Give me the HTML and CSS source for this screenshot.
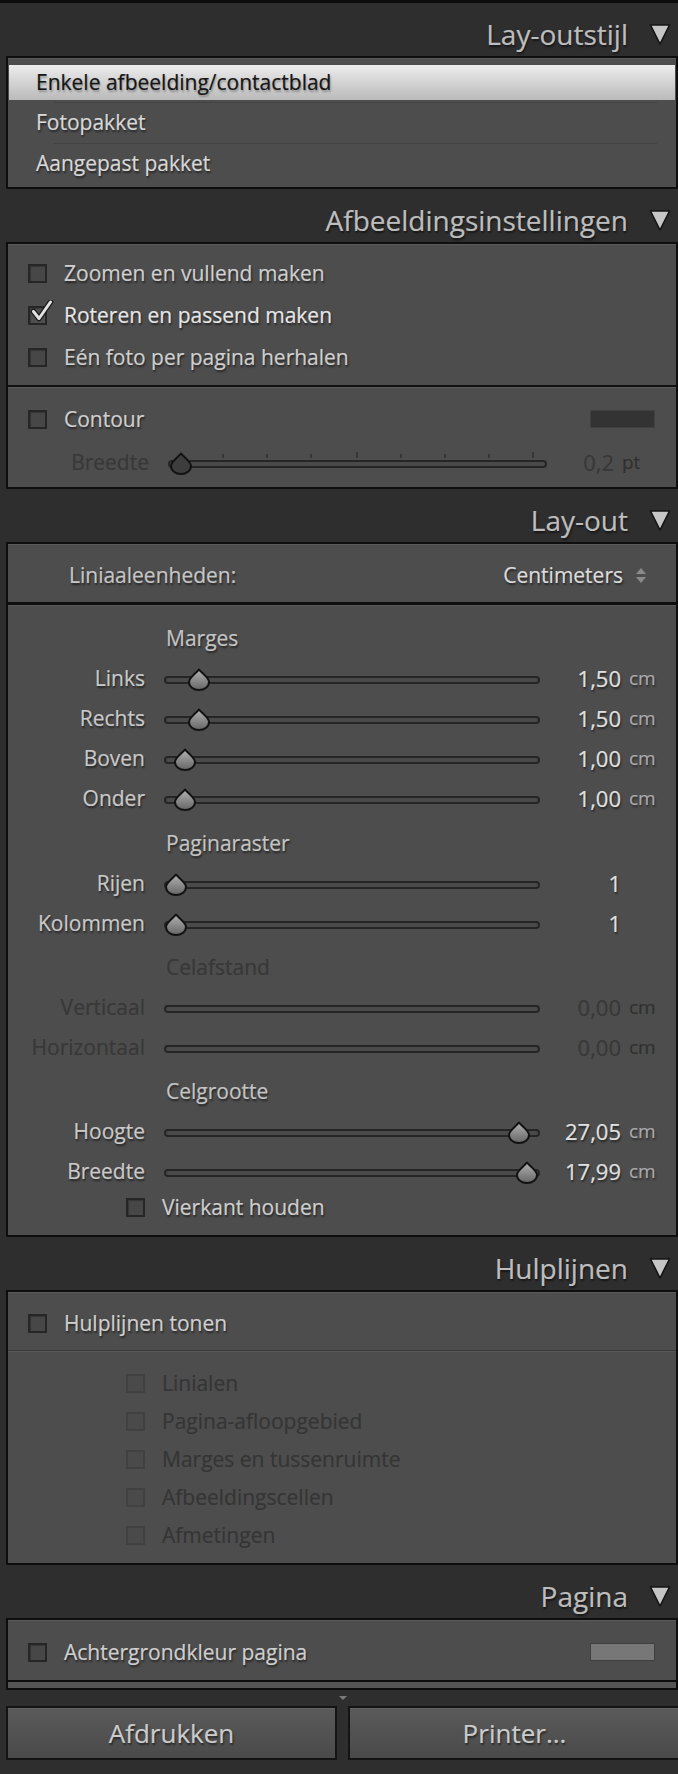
FILE: index.html
```html
<!DOCTYPE html>
<html lang="nl">
<head>
<meta charset="utf-8">
<title>Afdrukken</title>
<link rel="stylesheet" href="styles.css">
</head>
<body>
<svg class="defs" width="0" height="0" aria-hidden="true">
  <defs>
    <linearGradient id="thumbGrad" x1="0" y1="0" x2="0" y2="1">
      <stop offset="0" stop-color="#b2b2b2"/>
      <stop offset="1" stop-color="#666666"/>
    </linearGradient>
    <symbol id="thumb" viewBox="0 0 24 23">
      <path d="M12 1.5 C13.8 4.5 22 9.5 22 14 A10 8 0 0 1 2 14 C2 9.5 10.2 4.5 12 1.5 Z" stroke="#121212" stroke-width="2" stroke-linejoin="round"/>
    </symbol>
    <symbol id="tri" viewBox="0 0 22 22">
      <path d="M1.5 2 H20.5 L11 21 Z" fill="#c6c6c6" stroke="#141414" stroke-width="1.6" stroke-linejoin="round"/>
    </symbol>
    <symbol id="check" viewBox="0 0 26 24">
      <polyline points="5.5,11.5 11,18.5 22.5,2" fill="none" stroke="#1c1c1c" stroke-width="5.5" stroke-linecap="round" stroke-linejoin="round"/>
      <polyline points="5.5,11.5 11,18.5 22.5,2" fill="none" stroke="#e2e2e2" stroke-width="3" stroke-linecap="round" stroke-linejoin="round"/>
    </symbol>
  </defs>
</svg>

<div class="app">
  <div class="topbar"></div>

  <section class="sec">
    <header class="sec-head"><h2 class="sec-title">Lay-outstijl</h2><svg class="disclosure"><use href="#tri"/></svg></header>
    <div class="panel">
      <ul class="style-list">
        <li class="style-item is-selected">Enkele afbeelding/contactblad</li>
        <li class="style-item">Fotopakket</li>
        <li class="style-item">Aangepast pakket</li>
      </ul>
    </div>
  </section>

  <section class="sec">
    <header class="sec-head"><h2 class="sec-title">Afbeeldingsinstellingen</h2><svg class="disclosure"><use href="#tri"/></svg></header>
    <div class="panel">
      <div class="check-group">
        <div class="check-row"><span class="cb"></span><span class="cb-label">Zoomen en vullend maken</span></div>
        <div class="check-row"><span class="cb is-checked"><svg class="cb-check"><use href="#check"/></svg></span><span class="cb-label is-bright">Roteren en passend maken</span></div>
        <div class="check-row"><span class="cb"></span><span class="cb-label">Eén foto per pagina herhalen</span></div>
      </div>
      <div class="contour-group">
        <div class="check-row contour-row"><span class="cb"></span><span class="cb-label">Contour</span><span class="swatch swatch-dark"></span></div>
        <div class="slider-row contour-slider is-disabled">
          <span class="s-label">Breedte</span>
          <div class="track">
            <span class="tick" style="left:55px"></span>
            <span class="tick" style="left:99px"></span>
            <span class="tick" style="left:143px"></span>
            <span class="tick tick-tall" style="left:189px"></span>
            <span class="tick" style="left:233px"></span>
            <span class="tick" style="left:277px"></span>
            <span class="tick" style="left:321px"></span>
            <span class="tick tick-tall" style="left:365px"></span>
            <svg class="thumb thumb-off" style="left:13px"><use href="#thumb"/></svg>
          </div>
          <span class="s-value">0,2</span><span class="s-unit">pt</span>
        </div>
      </div>
    </div>
  </section>

  <section class="sec">
    <header class="sec-head"><h2 class="sec-title">Lay-out</h2><svg class="disclosure"><use href="#tri"/></svg></header>
    <div class="panel">
      <div class="units-row">
        <span class="units-label">Liniaaleenheden:</span>
        <span class="units-value">Centimeters</span>
        <span class="stepper"><span class="step-up"></span><span class="step-down"></span></span>
      </div>
      <div class="slider-group">
        <div class="group-title">Marges</div>
        <div class="slider-row"><span class="s-label">Links</span><div class="track"><svg class="thumb" style="left:35px"><use href="#thumb" fill="url(#thumbGrad)"/></svg></div><span class="s-value">1,50</span><span class="s-unit">cm</span></div>
        <div class="slider-row"><span class="s-label">Rechts</span><div class="track"><svg class="thumb" style="left:35px"><use href="#thumb" fill="url(#thumbGrad)"/></svg></div><span class="s-value">1,50</span><span class="s-unit">cm</span></div>
        <div class="slider-row"><span class="s-label">Boven</span><div class="track"><svg class="thumb" style="left:21px"><use href="#thumb" fill="url(#thumbGrad)"/></svg></div><span class="s-value">1,00</span><span class="s-unit">cm</span></div>
        <div class="slider-row"><span class="s-label">Onder</span><div class="track"><svg class="thumb" style="left:21px"><use href="#thumb" fill="url(#thumbGrad)"/></svg></div><span class="s-value">1,00</span><span class="s-unit">cm</span></div>

        <div class="group-title gap5">Paginaraster</div>
        <div class="slider-row"><span class="s-label">Rijen</span><div class="track"><svg class="thumb" style="left:12px"><use href="#thumb" fill="url(#thumbGrad)"/></svg></div><span class="s-value">1</span><span class="s-unit"></span></div>
        <div class="slider-row"><span class="s-label">Kolommen</span><div class="track"><svg class="thumb" style="left:12px"><use href="#thumb" fill="url(#thumbGrad)"/></svg></div><span class="s-value">1</span><span class="s-unit"></span></div>

        <div class="group-title gap4 is-disabled">Celafstand</div>
        <div class="slider-row is-disabled"><span class="s-label">Verticaal</span><div class="track"></div><span class="s-value">0,00</span><span class="s-unit">cm</span></div>
        <div class="slider-row is-disabled"><span class="s-label">Horizontaal</span><div class="track"></div><span class="s-value">0,00</span><span class="s-unit">cm</span></div>

        <div class="group-title gap4">Celgrootte</div>
        <div class="slider-row"><span class="s-label">Hoogte</span><div class="track"><svg class="thumb" style="left:355px"><use href="#thumb" fill="url(#thumbGrad)"/></svg></div><span class="s-value">27,05</span><span class="s-unit">cm</span></div>
        <div class="slider-row"><span class="s-label">Breedte</span><div class="track"><svg class="thumb" style="left:363px"><use href="#thumb" fill="url(#thumbGrad)"/></svg></div><span class="s-value">17,99</span><span class="s-unit">cm</span></div>

        <div class="check-row square-row"><span class="cb"></span><span class="cb-label">Vierkant houden</span></div>
      </div>
    </div>
  </section>

  <section class="sec">
    <header class="sec-head"><h2 class="sec-title">Hulplijnen</h2><svg class="disclosure"><use href="#tri"/></svg></header>
    <div class="panel">
      <div class="check-row toggle-row"><span class="cb"></span><span class="cb-label">Hulplijnen tonen</span></div>
      <div class="guide-group">
        <div class="check-row guide-row"><span class="cb is-disabled"></span><span class="cb-label is-disabled">Linialen</span></div>
        <div class="check-row guide-row"><span class="cb is-disabled"></span><span class="cb-label is-disabled">Pagina-afloopgebied</span></div>
        <div class="check-row guide-row"><span class="cb is-disabled"></span><span class="cb-label is-disabled">Marges en tussenruimte</span></div>
        <div class="check-row guide-row"><span class="cb is-disabled"></span><span class="cb-label is-disabled">Afbeeldingscellen</span></div>
        <div class="check-row guide-row"><span class="cb is-disabled"></span><span class="cb-label is-disabled">Afmetingen</span></div>
      </div>
    </div>
  </section>

  <section class="sec">
    <header class="sec-head"><h2 class="sec-title">Pagina</h2><svg class="disclosure"><use href="#tri"/></svg></header>
    <div class="panel">
      <div class="check-row page-row"><span class="cb"></span><span class="cb-label">Achtergrondkleur pagina</span><span class="swatch swatch-gray"></span></div>
    </div>
    <div class="panel-peek"></div>
  </section>

  <footer class="footer">
    <div class="grip"></div>
    <div class="actions">
      <button class="btn" type="button">Afdrukken</button>
      <button class="btn" type="button">Printer...</button>
    </div>
  </footer>
</div>
</body>
</html>
```

FILE: styles.css
```css
* {
  box-sizing: border-box;
  margin: 0;
  padding: 0;
}

html,
body {
  width: 678px;
  height: 1774px;
  overflow: hidden;
}

body {
  background: #2e2e2e;
  font-family: "Open Sans", "Noto Sans", "Liberation Sans", sans-serif;
  font-size: 21px;
  color: #d0d0d0;
  -webkit-text-stroke: 0.2px currentColor;
}

.defs {
  position: absolute;
  width: 0;
  height: 0;
}

.app {
  width: 678px;
}

.topbar {
  height: 3px;
  background: #0b0b0b;
}

/* section headers */
.sec-head {
  height: 53px;
  display: flex;
  justify-content: flex-end;
  align-items: center;
  gap: 21px;
  padding: 8px 7px 0 0;
}

.sec-title {
  font-size: 28px;
  font-weight: 400;
  line-height: 36px;
  color: #bdbdbd;
  text-shadow: 1px 2px 2px rgba(0, 0, 0, 0.55);
  white-space: nowrap;
}

.disclosure {
  width: 22px;
  height: 22px;
  display: block;
  flex: none;
}

/* panels */
.panel {
  margin-left: 6px;
  border: 2px solid #0e0e0e;
  background: #4d4d4d;
  box-shadow: inset 0 1px 0 #5b5b5b;
}

.panel-peek {
  margin-left: 6px;
  height: 8px;
  border: 2px solid #0e0e0e;
  border-top: 0;
  background: #565656;
}

/* layout style list */
.style-list {
  list-style: none;
  padding: 7px 0 3px;
}

.style-item {
  height: 41px;
  line-height: 41px;
  padding-left: 28px;
  color: #d8d8d8;
  text-shadow: 1px 2px 2px rgba(0, 0, 0, 0.55);
  white-space: nowrap;
  background: linear-gradient(#434343, #434343) no-repeat 46px 0 / 603px 1px;
}

.style-item.is-selected {
  height: 35px;
  line-height: 35px;
  margin: 0 1px 2px;
  padding-left: 27px;
  color: #151515;
  text-shadow: 1px 2px 2px rgba(0, 0, 0, 0.3);
  background: linear-gradient(#ececec, #bababa);
}

/* checkboxes */
.check-row {
  display: flex;
  align-items: center;
  gap: 17px;
  padding-left: 20px;
  white-space: nowrap;
}

.cb {
  position: relative;
  flex: none;
  width: 19px;
  height: 19px;
  border: 2px solid #262626;
  background: #474747;
  box-shadow: inset 1px 1px 1px rgba(0, 0, 0, 0.25);
}

.cb.is-checked {
  background: #4f4f4f;
}

.cb.is-disabled {
  border-color: #414141;
  background: #4a4a4a;
  box-shadow: none;
}

.cb-check {
  position: absolute;
  left: -2px;
  top: -8px;
  width: 26px;
  height: 24px;
}

.cb-label {
  color: #cfcfcf;
  text-shadow: 1px 2px 2px rgba(0, 0, 0, 0.55);
}

.cb-label.is-bright {
  color: #e6e6e6;
}

.cb-label.is-disabled {
  color: #353535;
  text-shadow: none;
}

.check-group {
  padding: 8px 0 7px;
}

.check-group .check-row {
  height: 42px;
}

.contour-group {
  border-top: 2px solid #111111;
  box-shadow: inset 0 1px 0 #5a5a5a;
  padding: 13px 0 5px;
}

.contour-row {
  height: 38px;
  margin-bottom: 4px;
}

.swatch {
  flex: none;
  margin-left: auto;
  margin-right: 21px;
  width: 65px;
  height: 18px;
  border: 1px solid #414141;
}

.swatch-dark {
  background: #333333;
}

.swatch-gray {
  background: #777777;
  border-color: #3f3f3f;
}

/* sliders */
.slider-row {
  height: 40px;
  display: flex;
  align-items: center;
  white-space: nowrap;
}

.s-label {
  flex: none;
  width: 137px;
  text-align: right;
  color: #c9c9c9;
  text-shadow: 1px 2px 2px rgba(0, 0, 0, 0.55);
}

.track {
  position: relative;
  flex: none;
  width: 376px;
  height: 8px;
  margin: 3px 0 0 19px;
  border: 2px solid #252525;
  border-radius: 5px;
  background: #4a4a4a;
}

.thumb {
  position: absolute;
  top: -10px;
  width: 24px;
  height: 23px;
  margin-left: -14px;
  overflow: visible;
}

.thumb-off use {
  fill: #3d3d3d;
}

.tick {
  position: absolute;
  bottom: 8px;
  width: 2px;
  height: 4px;
  margin-left: -3px;
  background: #363636;
}

.tick-tall {
  height: 6px;
}

.s-value {
  flex: none;
  width: 81px;
  text-align: right;
  font-size: 22px;
  color: #e0e0e0;
  text-shadow: 1px 2px 2px rgba(0, 0, 0, 0.55);
}

.s-unit {
  flex: none;
  margin-left: 8px;
  font-size: 19px;
  color: #a9a9a9;
  text-shadow: 1px 2px 2px rgba(0, 0, 0, 0.45);
}

.slider-row.is-disabled .s-label,
.slider-row.is-disabled .s-value {
  color: #383838;
  text-shadow: none;
}

.slider-row.is-disabled .s-unit {
  color: #303030;
  text-shadow: none;
}

.contour-slider .s-label {
  width: 141px;
}

.contour-slider .track {
  width: 379px;
}

.contour-slider .s-value {
  width: 67px;
}

/* ruler units */
.units-row {
  height: 61px;
  padding: 4px 30px 0 61px;
  display: flex;
  align-items: center;
  border-bottom: 3px solid #0e0e0e;
  white-space: nowrap;
}

.units-label {
  color: #c6c6c6;
  text-shadow: 1px 2px 2px rgba(0, 0, 0, 0.55);
}

.units-value {
  margin-left: auto;
  color: #dcdcdc;
  text-shadow: 1px 2px 2px rgba(0, 0, 0, 0.55);
}

.stepper {
  margin-left: 13px;
  display: flex;
  flex-direction: column;
  gap: 3px;
}

.step-up,
.step-down {
  width: 0;
  height: 0;
  border-left: 5px solid transparent;
  border-right: 5px solid transparent;
}

.step-up {
  border-bottom: 6px solid #8a8a8a;
}

.step-down {
  border-top: 6px solid #8a8a8a;
}

.slider-group {
  padding: 13px 0 12px;
  box-shadow: inset 0 1px 0 #5a5a5a;
}

.group-title {
  height: 40px;
  line-height: 40px;
  padding-left: 158px;
  color: #c4c4c4;
  text-shadow: 1px 2px 2px rgba(0, 0, 0, 0.55);
}

.group-title.gap5 {
  margin-top: 5px;
}

.group-title.gap4 {
  margin-top: 4px;
}

.group-title.is-disabled {
  color: #383838;
  text-shadow: none;
}

.square-row {
  height: 32px;
  padding-left: 118px;
}

/* guides */
.toggle-row {
  height: 59px;
  padding-top: 4px;
  border-bottom: 1px solid #3b3b3b;
}

.guide-group {
  padding: 13px 0 9px;
  box-shadow: inset 0 1px 0 #575757;
}

.guide-row {
  height: 38px;
  padding-left: 118px;
}

/* page */
.page-row {
  height: 60px;
  padding-top: 4px;
}

/* footer */
.footer {
  padding: 6px 0 14px;
}

.grip {
  width: 0;
  height: 0;
  margin: 0 0 6px 339px;
  border-left: 4px solid transparent;
  border-right: 4px solid transparent;
  border-top: 4px solid #7a7a7a;
}

.actions {
  display: grid;
  grid-template-columns: 331px 333px;
  column-gap: 11px;
  padding-left: 6px;
}

.btn {
  height: 54px;
  border: 2px solid #141414;
  background: linear-gradient(#5a5a5a, #4a4a4a);
  font-family: inherit;
  font-size: 26px;
  color: #cbcbcb;
  -webkit-text-stroke: 0.2px currentColor;
  text-shadow: 1px 2px 2px rgba(0, 0, 0, 0.55);
  box-shadow: inset 0 1px 0 #636363;
}
```
